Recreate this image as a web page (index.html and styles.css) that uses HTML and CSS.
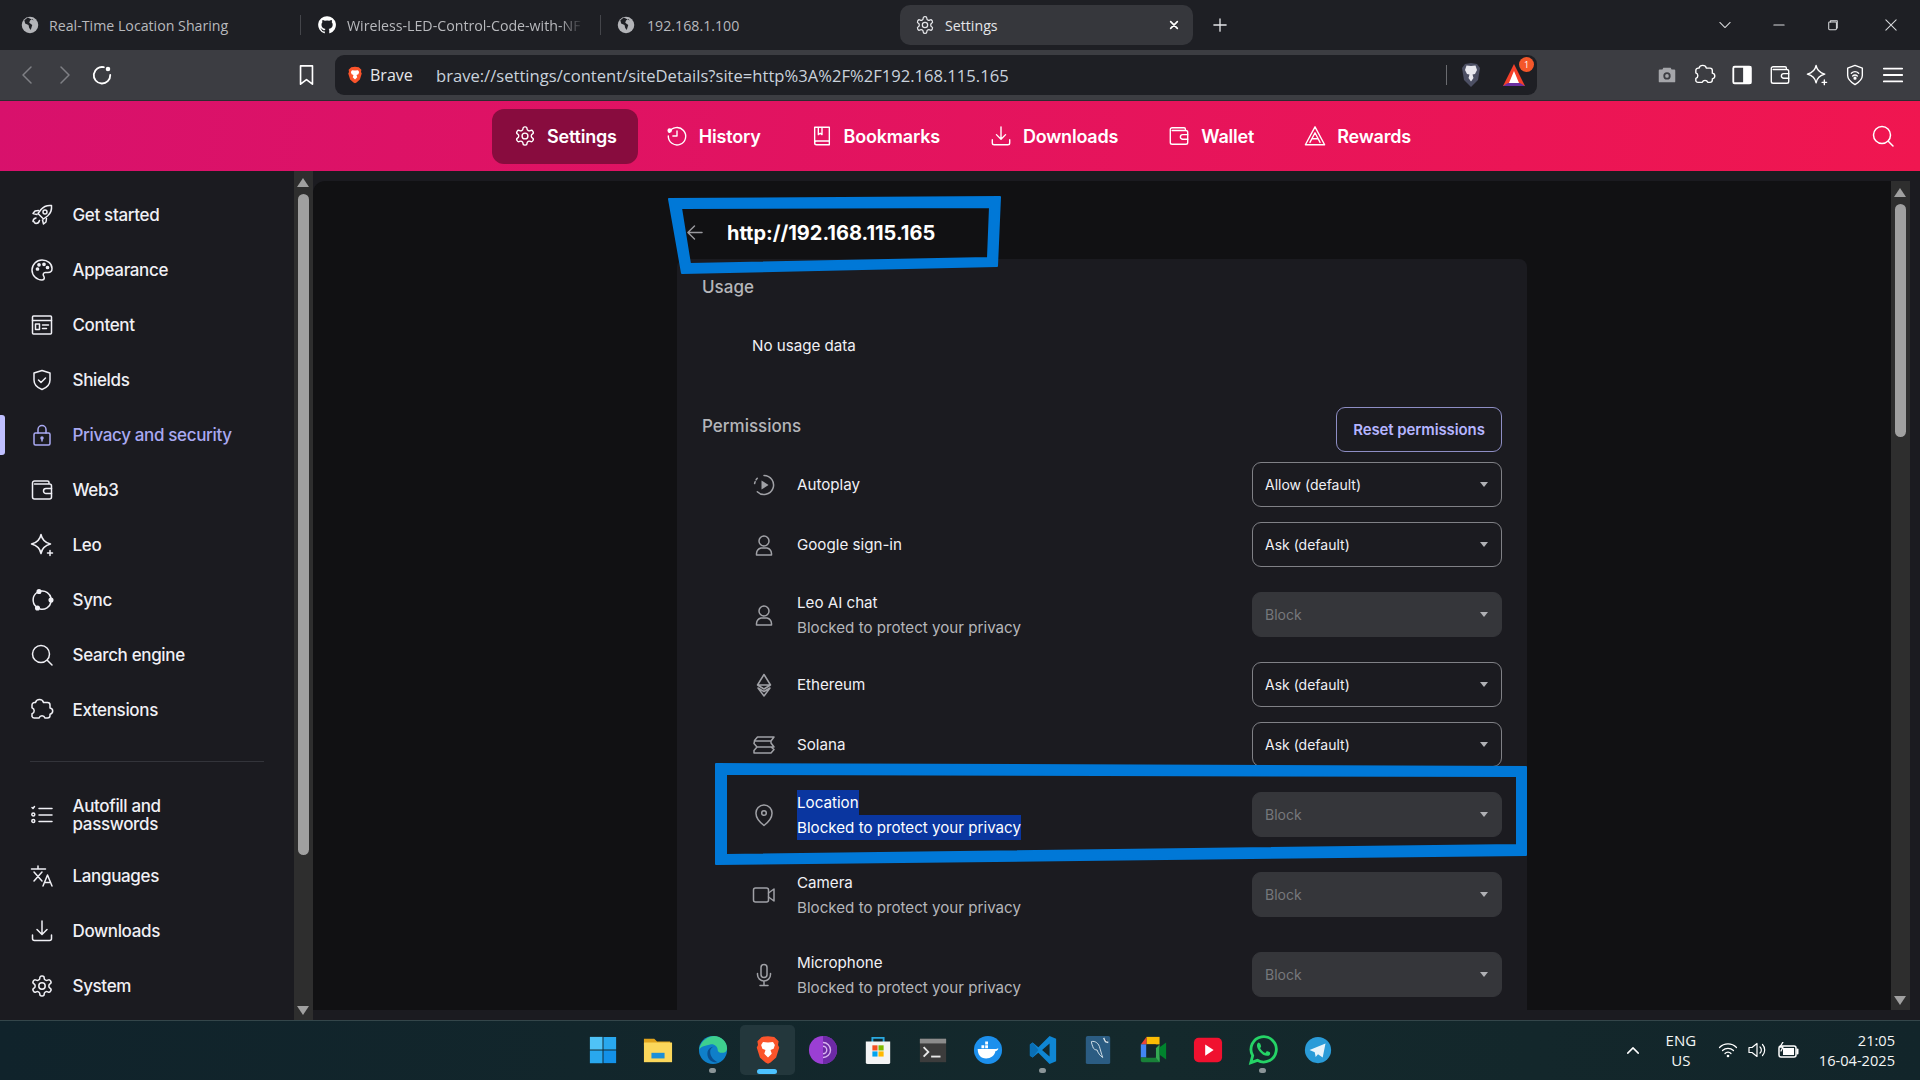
FILE: index.html
```html
<!DOCTYPE html>
<html>

<head>
    <title>Settings</title>
    <meta charset="UTF-8">
    <link rel="stylesheet" href="styles.css">
</head>

<body>
    <svg class="sprite" xmlns="http://www.w3.org/2000/svg">
        <symbol id="i-gear" viewBox="0 0 24 24"><path d="M12.22 2h-.44a2 2 0 0 0-2 2v.18a2 2 0 0 1-1 1.73l-.43.25a2 2 0 0 1-2 0l-.15-.08a2 2 0 0 0-2.73.73l-.22.38a2 2 0 0 0 .73 2.73l.15.1a2 2 0 0 1 1 1.72v.51a2 2 0 0 1-1 1.74l-.15.09a2 2 0 0 0-.73 2.73l.22.38a2 2 0 0 0 2.73.73l.15-.08a2 2 0 0 1 2 0l.43.25a2 2 0 0 1 1 1.73V20a2 2 0 0 0 2 2h.44a2 2 0 0 0 2-2v-.18a2 2 0 0 1 1-1.73l.43-.25a2 2 0 0 1 2 0l.15.08a2 2 0 0 0 2.73-.73l.22-.39a2 2 0 0 0-.73-2.73l-.15-.08a2 2 0 0 1-1-1.74v-.5a2 2 0 0 1 1-1.74l.15-.09a2 2 0 0 0 .73-2.73l-.22-.38a2 2 0 0 0-2.73-.73l-.15.08a2 2 0 0 1-2 0l-.43-.25a2 2 0 0 1-1-1.73V4a2 2 0 0 0-2-2z"/><circle cx="12" cy="12" r="3.2"/></symbol>
        <symbol id="i-puzzle" viewBox="0 0 24 24"><path d="M9.500 1.500c2 0 3.500 1 4 3h4a2.500 2.500 0 0 1 2.500 2.500v3c1.700.3 2.700 1.500 2.700 3s-1 2.800-2.700 3.200v1.300a2.500 2.500 0 0 1-2.500 2.500h-2.500c-.5-1.500-1.500-2.200-3-2.200s-2.500.8-3 2.200H4.500A2.500 2.500 0 0 1 2 18.500v-2.800c1.500-.5 2.200-1.500 2.200-3s-.8-2.500-2.200-3V7a2.500 2.500 0 0 1 2.500-2.500h1c.5-2 2-3 4-3z"/></symbol>
        <symbol id="i-rocket" viewBox="0 0 24 24"><path d="M21.5 2.5c-4.5-.5-8 1-10.5 4L8 10.5l5.5 5.5 4-3c3-2.500 4.500-6 4-10.500z"/><circle cx="15" cy="9" r="2"/><path d="M8.500 7.500 5 8 3 10.500l4 1M16.500 15.500 16 19l-2.500 2-1-4M6 15c-2 .5-3 2-3 3.500.5.500 1 .5 1.500.5 0 1 .5 1.500 1.500 1.500 1.500 0 3-1 3.500-3"/></symbol>
        <symbol id="i-palette" viewBox="0 0 24 24"><path d="M12 2a10 10 0 1 0 0 20c1.500 0 2.300-1 2.300-2.200 0-1.500-1.100-2-1.100-3.300 0-1.200 1-2 2.300-2H18c2.300 0 4-1.700 4-4C22 5.500 17.500 2 12 2z"/><circle cx="7.500" cy="11" r="1.100" fill="currentColor"/><circle cx="9" cy="6.800" r="1.100" fill="currentColor"/><circle cx="14" cy="6.300" r="1.100" fill="currentColor"/><circle cx="17.500" cy="9.500" r="1.100" fill="currentColor"/></symbol>
        <symbol id="i-content" viewBox="0 0 24 24"><rect x="2.500" y="3" width="19" height="18" rx="1"/><path d="M2.500 7.500h19M12.500 12h6M12.500 15.500h4"/><rect x="5.500" y="11" width="4" height="5.500"/></symbol>
        <symbol id="i-shield" viewBox="0 0 24 24"><path d="M12 2.500 4 5v7c0 5 4 8 8 9.500 4-1.500 8-4.500 8-9.500V5z"/><path d="m8.500 12 2.500 2.500 4.500-4.500"/></symbol>
        <symbol id="i-lock" viewBox="0 0 24 24"><rect x="4" y="10" width="16" height="12" rx="1.500"/><path d="M8 10V6.500a4 4 0 0 1 8 0V10M12 15v3"/><circle cx="12" cy="15" r="1" fill="currentColor"/></symbol>
        <symbol id="i-wallet" viewBox="0 0 24 24"><path d="M19 6V4.500A1.500 1.500 0 0 0 17.500 3H4.500A2 2 0 0 0 2.500 5v14a2 2 0 0 0 2 2h15a2 2 0 0 0 2-2V8a2 2 0 0 0-2-2H4.500"/><path d="M21.500 10.500H16a2.500 2.500 0 0 0 0 5h5.500"/></symbol>
        <symbol id="i-leo" viewBox="0 0 24 24"><path d="M11 1.500c1 5.500 3.500 8 9.500 9.500-6 1.500-8.500 4-9.500 9.500-1-5.500-3.500-8-9.500-9.500 6-1.500 8.500-4 9.500-9.500z"/><path d="M20 17.500v5M17.500 20h5"/></symbol>
        <symbol id="i-sync" viewBox="0 0 24 24"><path d="M6 18.500A9 9 0 0 1 7 4.500M11 3a9 9 0 0 1 10 7M21 14a9 9 0 0 1-11 7"/><circle cx="9" cy="3.500" r="1.800" fill="currentColor"/><circle cx="21" cy="12" r="1.800" fill="currentColor"/><circle cx="7.500" cy="20" r="1.800" fill="currentColor"/></symbol>
        <symbol id="i-search" viewBox="0 0 24 24"><circle cx="11" cy="11" r="8.500"/><path d="m17.500 17.500 4.500 4.500"/></symbol>
        <symbol id="i-list" viewBox="0 0 24 24"><path d="M9 5.500h13M9 12h13M9 18.500h13M2 4.500l1 1 1.500-2"/><circle cx="3.300" cy="11.500" r="1.500"/><circle cx="3.300" cy="18" r="1.500"/></symbol>
        <symbol id="i-lang" viewBox="0 0 24 24"><path d="M1.500 5h14M8 2v3M4 8l8 9M12 8l-8 9M13 22l4.500-11 4.500 11M14.500 18.500h6"/></symbol>
        <symbol id="i-download" viewBox="0 0 24 24"><path d="M12 2v13M7 10.500l5 5 5-5M2.500 16v3.500a2 2 0 0 0 2 2h15a2 2 0 0 0 2-2V16"/></symbol>
        <symbol id="i-history" viewBox="0 0 24 24"><path d="M3.500 8A9.500 9.500 0 1 1 2.500 12"/><path d="M12 6.500V12H7.500"/><circle cx="4" cy="6" r="1.700" fill="currentColor"/></symbol>
        <symbol id="i-book" viewBox="0 0 24 24"><path d="M4 2.500h16v15H6a2 2 0 0 0-2 2zM4 19.500a2 2 0 0 0 2 2h14v-4M8 2.500v8l2-1.500 2 1.500v-8"/></symbol>
        <symbol id="i-rewards" viewBox="0 0 24 24"><path d="M12 2 1.500 21.500h21zM12 8.500 6.500 19M12 8.500 17.500 19M9 15h6"/></symbol>
        <symbol id="i-play" viewBox="0 0 24 24"><path d="M12 2.500a9.500 9.500 0 1 1-6.700 16.200"/><path d="M5.300 5.300a9.500 9.500 0 0 0-2.800 6.700" stroke-dasharray="2 2"/><path d="M9.500 7.500v9l7-4.500z" fill="currentColor" stroke="none"/></symbol>
        <symbol id="i-user" viewBox="0 0 24 24"><circle cx="12" cy="8" r="5"/><path d="M4.500 22v-1.500A6 6 0 0 1 9 15h6a6 6 0 0 1 4.500 5.500V22z"/></symbol>
        <symbol id="i-eth" viewBox="0 0 24 24"><path d="M12 1.500 5.500 12 12 16l6.500-4zM5.500 12H18.500M6 15l6 8 6-8-6 3.500z"/></symbol>
        <symbol id="i-sol" viewBox="0 0 24 24"><path d="M5.500 4H22l-3 4H2.500a1 1 0 0 1 0-.5zM2.500 8 2 10.500 5 14h17l-3-4V8M5 14l-3 3.500V20h17l3-3.500-3-2.500"/></symbol>
        <symbol id="i-pin" viewBox="0 0 24 24"><path d="M12 2a8 8 0 0 0-8 8.500c0 4 3.500 8.500 8 12 4.500-3.500 8-8 8-12A8 8 0 0 0 12 2z"/><circle cx="12" cy="10" r="2.300"/></symbol>
        <symbol id="i-cam" viewBox="0 0 24 24"><rect x="1.500" y="5" width="15" height="14" rx="2"/><path d="M16.500 10 22 6v12l-5.500-4"/></symbol>
        <symbol id="i-mic" viewBox="0 0 24 24"><rect x="9" y="1.500" width="6" height="13" rx="3"/><path d="M5.500 10.500v1a6.500 6.500 0 0 0 13 0v-1M12 18v4.500M8 22.500h8"/></symbol>
        <symbol id="i-globe" viewBox="0 0 24 24"><circle cx="12" cy="12" r="11" fill="#b3b4b8"/><path d="M9 2 4.500 5.500l1 4.500 4.500 2 1 4 2 2.500 2-6.500-4-3 1-3 3-2 2 2" fill="#1e1f24"/></symbol>
        <symbol id="i-github" viewBox="0 0 24 24"><path fill="#fff" d="M12 1.500A10.500 10.500 0 0 0 8.700 22c.5.100.700-.2.700-.5v-1.800c-2.900.6-3.500-1.400-3.500-1.400-.5-1.200-1.200-1.500-1.200-1.500-1-.7.100-.7.100-.7 1 .1 1.600 1.100 1.600 1.100.9 1.600 2.500 1.100 3.100.9.100-.7.400-1.100.7-1.400-2.300-.3-4.800-1.200-4.800-5.200 0-1.100.4-2.100 1.100-2.800-.1-.3-.5-1.300.1-2.800 0 0 .9-.3 2.900 1.100a10 10 0 0 1 5.200 0c2-1.400 2.900-1.100 2.900-1.100.6 1.500.2 2.500.1 2.800.7.700 1.100 1.700 1.100 2.800 0 4-2.500 4.900-4.800 5.200.4.300.7 1 .7 1.900v2.900c0 .3.200.6.700.5A10.500 10.500 0 0 0 12 1.500z"/></symbol>
        <symbol id="i-brave" viewBox="0 0 24 24"><path fill="#fb542b" d="M12 1 7 1.500 3.500 5 4 8 3 10l2.500 8 4.500 4 2 1 2-1 4.500-4 2.500-8-1-2 .5-3L17 1.500z"/><path fill="#fff" d="M12 6 8 5.500 6.500 8l1 3 2.500 1-1 3 3 3 3-3-1-3 2.500-1 1-3L16 5.500z"/></symbol>
        <symbol id="i-lion" viewBox="0 0 20 24"><path fill="#4c4f63" d="M10 0 4 1 1 5l1 6 1 6 7 7 7-7 1-6 1-6-3-4z"/><path fill="#e8e8ee" d="M10 3 5.500 2.500 4 7l2 4 2.500.5-1 3.500 2.500 3.500 2.500-3.500-1-3.500 2.500-.5 2-4-1.500-4.500z"/></symbol>
    </svg>

    <div class="tabstrip">
        <div class="tab">
            <svg class="ico-18"><use href="#i-globe"/></svg>
            <span>Real-Time Location Sharing</span>
        </div>
        <div class="tab tab-sep">
            <svg class="ico-20"><use href="#i-github"/></svg>
            <span class="tab-fade">Wireless-LED-Control-Code-with-NF</span>
        </div>
        <div class="tab tab-sep">
            <svg class="ico-18 tab-globe"><use href="#i-globe"/></svg>
            <span>192.168.1.100</span>
        </div>
        <div class="tab tab-active">
            <svg class="ico line ico-20"><use href="#i-gear"/></svg>
            <span>Settings</span>
            <svg class="line tab-close" viewBox="0 0 12 12"><path d="m2 2 8 8M10 2l-8 8"/></svg>
        </div>
        <svg class="line tab-new" viewBox="0 0 16 16"><path d="M8 1v14M1 8h14"/></svg>
        <div class="win-btns">
            <svg class="line" viewBox="0 0 14 14"><path d="m1 4 6 6 6-6"/></svg>
            <svg class="line" viewBox="0 0 14 14"><path d="M1 7h12"/></svg>
            <svg class="line" viewBox="0 0 14 14"><rect x="2" y="3.500" width="9" height="9" rx="1"/><path d="M4 3.500V2h8v8.500h-1"/></svg>
            <svg class="line" viewBox="0 0 14 14"><path d="m1 1 12 12M13 1 1 13"/></svg>
        </div>
    </div>

    <div class="toolbar">
        <div class="nav-btns">
            <svg class="line dim" viewBox="0 0 12 20"><path d="M10 2 2 10l8 8"/></svg>
            <svg class="line dim" viewBox="0 0 12 20"><path d="m2 2 8 8-8 8"/></svg>
            <svg class="line reload" viewBox="0 0 24 24"><path d="M14 3.500A9 9 0 1 0 21 12" stroke-width="2"/><circle cx="18.500" cy="5.500" r="2.500" fill="#fff" stroke="none"/></svg>
        </div>
        <svg class="line bookmark" viewBox="0 0 18 24"><path d="M2.500 2h13v20L9 17l-6.500 5z" stroke-width="1.800"/></svg>
        <div class="addr">
            <svg class="ico-18"><use href="#i-brave"/></svg>
            <span class="addr-name">Brave</span>
            <span class="addr-url">brave://settings/content/siteDetails?site=http%3A%2F%2F192.168.115.165</span>
            <i class="addr-sep"></i>
            <svg class="addr-lion"><use href="#i-lion"/></svg>
            <div class="addr-rewards">
                <svg viewBox="0 0 24 24"><path fill="#f5402a" d="M12 1 1 23h22z"/><path fill="#6b2fa0" d="m1 23 5-3h12l5 3z"/><path fill="#fff" d="m12 8-5 12h10z"/></svg>
                <b>1</b>
            </div>
        </div>
        <div class="tool-icons">
            <svg viewBox="0 0 24 24"><path fill="#a5a6aa" d="M8 4h8l1 2h3a1 1 0 0 1 1 1v12a1 1 0 0 1-1 1H4a1 1 0 0 1-1-1V7a1 1 0 0 1 1-1h3z"/><circle cx="12" cy="13" r="4" fill="#3c3d42"/><circle cx="12" cy="13" r="2" fill="#a5a6aa"/></svg>
            <svg class="line"><use href="#i-puzzle"/></svg>
            <svg class="line" viewBox="0 0 24 24"><rect x="2.500" y="3" width="19" height="18" rx="1.500" stroke-width="2"/><rect x="14" y="3" width="7.500" height="18" fill="#fff"/></svg>
            <svg class="line"><use href="#i-wallet"/></svg>
            <svg class="line"><use href="#i-leo"/></svg>
            <svg class="line" viewBox="0 0 24 24"><path d="M12 1.500 4 4.500v8c0 4.500 4 7.500 8 10 4-2.500 8-5.500 8-10v-8z"/><path d="M8 10a6 6 0 0 1 8 0M9.500 13a3.500 3.500 0 0 1 5 0"/><circle cx="12" cy="15.500" r="1" fill="#fff"/></svg>
            <svg class="line" viewBox="0 0 24 24"><path d="M2 5h20M2 12h20M2 19h20" stroke-width="2"/></svg>
        </div>
    </div>

    <div class="topnav">
        <a class="topnav-item current"><svg class="line"><use href="#i-gear"/></svg>Settings</a>
        <a class="topnav-item"><svg class="line"><use href="#i-history"/></svg>History</a>
        <a class="topnav-item"><svg class="line"><use href="#i-book"/></svg>Bookmarks</a>
        <a class="topnav-item"><svg class="line"><use href="#i-download"/></svg>Downloads</a>
        <a class="topnav-item"><svg class="line"><use href="#i-wallet"/></svg>Wallet</a>
        <a class="topnav-item"><svg class="line"><use href="#i-rewards"/></svg>Rewards</a>
        <svg class="line topnav-search"><use href="#i-search"/></svg>
    </div>

    <div class="main">
        <nav class="sidebar">
            <a class="side-item"><svg class="line"><use href="#i-rocket"/></svg>Get started</a>
            <a class="side-item"><svg class="line"><use href="#i-palette"/></svg>Appearance</a>
            <a class="side-item"><svg class="line"><use href="#i-content"/></svg>Content</a>
            <a class="side-item"><svg class="line"><use href="#i-shield"/></svg>Shields</a>
            <a class="side-item active"><svg class="line"><use href="#i-lock"/></svg>Privacy and security</a>
            <a class="side-item"><svg class="line"><use href="#i-wallet"/></svg>Web3</a>
            <a class="side-item"><svg class="line"><use href="#i-leo"/></svg>Leo</a>
            <a class="side-item"><svg class="line"><use href="#i-sync"/></svg>Sync</a>
            <a class="side-item"><svg class="line"><use href="#i-search"/></svg>Search engine</a>
            <a class="side-item"><svg class="line"><use href="#i-puzzle"/></svg>Extensions</a>
            <hr class="side-sep">
            <a class="side-item side-tall"><svg class="line"><use href="#i-list"/></svg><span>Autofill and<br>passwords</span></a>
            <a class="side-item"><svg class="line"><use href="#i-lang"/></svg>Languages</a>
            <a class="side-item"><svg class="line"><use href="#i-download"/></svg>Downloads</a>
            <a class="side-item"><svg class="line"><use href="#i-gear"/></svg>System</a>
        </nav>
        <div class="scrollbar scroll-side"><i class="up"></i><i class="thumb"></i><i class="down"></i></div>

        <div class="panel-wrap">
            <div class="panel">
                <div class="page">
                    <div class="page-head">
                        <svg class="line" viewBox="0 0 18 18"><path d="M17 9H2M9 2 2 9l7 7"/></svg>
                        <h1>http://192.168.115.165</h1>
                    </div>
                    <div class="card">
                        <h2 class="card-title">Usage</h2>
                        <p class="no-data">No usage data</p>
                        <div class="perm-head">
                            <h2 class="card-title">Permissions</h2>
                            <button class="reset">Reset permissions</button>
                        </div>
                        <div class="perm-row">
                            <svg class="line"><use href="#i-play"/></svg>
                            <div class="perm-text"><div>Autoplay</div></div>
                            <div class="pick">Allow (default)</div>
                        </div>
                        <div class="perm-row">
                            <svg class="line"><use href="#i-user"/></svg>
                            <div class="perm-text"><div>Google sign-in</div></div>
                            <div class="pick">Ask (default)</div>
                        </div>
                        <div class="perm-row tall">
                            <svg class="line"><use href="#i-user"/></svg>
                            <div class="perm-text"><div>Leo AI chat</div><div class="sub">Blocked to protect your privacy</div></div>
                            <div class="pick off">Block</div>
                        </div>
                        <div class="perm-row">
                            <svg class="line"><use href="#i-eth"/></svg>
                            <div class="perm-text"><div>Ethereum</div></div>
                            <div class="pick">Ask (default)</div>
                        </div>
                        <div class="perm-row">
                            <svg class="line"><use href="#i-sol"/></svg>
                            <div class="perm-text"><div>Solana</div></div>
                            <div class="pick">Ask (default)</div>
                        </div>
                        <div class="perm-row tall">
                            <svg class="line"><use href="#i-pin"/></svg>
                            <div class="perm-text picked"><div><span>Location</span></div><div class="sub"><span>Blocked to protect your privacy</span></div></div>
                            <div class="pick off">Block</div>
                        </div>
                        <div class="perm-row tall">
                            <svg class="line"><use href="#i-cam"/></svg>
                            <div class="perm-text"><div>Camera</div><div class="sub">Blocked to protect your privacy</div></div>
                            <div class="pick off">Block</div>
                        </div>
                        <div class="perm-row tall">
                            <svg class="line"><use href="#i-mic"/></svg>
                            <div class="perm-text"><div>Microphone</div><div class="sub">Blocked to protect your privacy</div></div>
                            <div class="pick off">Block</div>
                        </div>
                    </div>
                </div>
            </div>
            <div class="scrollbar scroll-main"><i class="up"></i><i class="thumb"></i><i class="down"></i></div>
        </div>
    </div>

    <div class="taskbar">
        <div></div>
        <div class="task-apps">
            <div class="app"><svg viewBox="0 0 32 32"><path fill="#4fc3f7" d="M2 2h13.500v13.500H2z"/><path fill="#29a8ee" d="M16.500 2H30v13.500H16.500zM2 16.500h13.500V30H2z"/><path fill="#1391e8" d="M16.500 16.500H30V30H16.500z"/></svg></div>
            <div class="app"><svg viewBox="0 0 32 32"><path fill="#e0a31c" d="M1 4h11l3 3h14v4H1z"/><path fill="#fbd75b" d="M1 8h30v21H1z"/><path fill="#1b8fd8" d="M9 19h14v6H9z"/></svg></div>
            <div class="app dot"><svg viewBox="0 0 32 32"><circle cx="16" cy="16" r="15" fill="#0f7fc9"/><path fill="#3ecf8e" d="M1 16C3 5 12 1 17 1c8 0 14 6 14 13 0 4-3 5-6 5-2 0-4-1-4-3 0-4-4-7-8-6-6 1-11 3-12 6z"/><path fill="#0a4f8f" d="M13 18c0-4 3-6 6-6-4 0-9 2-9 8s5 10 11 9c-4-2-8-6-8-11z"/></svg></div>
            <div class="app running"><svg viewBox="0 0 24 24"><use href="#i-brave"/></svg></div>
            <div class="app"><svg viewBox="0 0 32 32"><circle cx="16" cy="16" r="15" fill="#9b3fd4"/><path fill="#6d2aa6" d="M16 1a15 15 0 0 1 0 30z"/><path fill="none" stroke="#d9b3f0" stroke-width="1.500" d="M16 8a8 8 0 0 1 0 16M16 12a4 4 0 0 1 0 8"/></svg></div>
            <div class="app"><svg viewBox="0 0 32 32"><path fill="none" stroke="#2aa9e0" stroke-width="2" d="M10 8V3h12v5"/><path fill="#f4f4f4" d="M3 7h26v22a2 2 0 0 1-2 2H5a2 2 0 0 1-2-2z"/><path fill="#f25022" d="M10 11h5.500v5.500H10z"/><path fill="#7fba00" d="M16.500 11H22v5.500h-5.500z"/><path fill="#00a4ef" d="M10 17.500h5.500V23H10z"/><path fill="#ffb900" d="M16.500 17.500H22V23h-5.500z"/></svg></div>
            <div class="app"><svg viewBox="0 0 32 32"><path fill="#3c3c3c" d="M2 4h28v25H2z"/><path fill="#8c8c8c" d="M2 4h28v5H2z"/><path fill="none" stroke="#e8e8e8" stroke-width="2" d="m6 13 5 5-5 5"/><path fill="#e8e8e8" d="M14 22h10v2H14z"/></svg></div>
            <div class="app"><svg viewBox="0 0 32 32"><circle cx="16" cy="16" r="15" fill="#1c90ed"/><path fill="#fff" d="M5 15h19c1 0 2-1 3-1 0 2-2 3-3 3-1 5-5 8-10 8-6 0-9-4-9-10z"/><path fill="#fff" d="M9 11h3v3H9zM13 11h3v3h-3zM13 7h3v3h-3z"/></svg></div>
            <div class="app dot"><svg viewBox="0 0 32 32"><path fill="#0f86d3" d="m23 1 7 3v24l-7 3-12-12-6 5-3-2V10l3-2 6 5zM23 9l-8 7 8 7z"/><path fill="#0a6fb5" d="M2 10v12l3 2 6-8-6-8z"/></svg></div>
            <div class="app"><svg viewBox="0 0 32 32"><rect x="3" y="1" width="26" height="30" rx="2" fill="#2b5c82"/><path fill="none" stroke="#d7e4ec" d="M9 7c4-1 8 2 9 7l2 7 1 3c-3-2-5-5-6-8-2 0-3-1-4-2-1-3-2-5-2-7z"/><path stroke="#d7e4ec" stroke-width="1.500" d="m22 3 2 4 3 1"/></svg></div>
            <div class="app"><svg viewBox="0 0 32 32"><path fill="#fbbc04" d="M9 2h14v8H9z"/><path fill="#ea4335" d="M9 2v8H3z"/><path fill="#4285f4" d="M3 10h6v14H3z"/><path fill="#188038" d="M3 24h20v5H5a2 2 0 0 1-2-2z"/><path fill="#34a853" d="M23 10v19l-4-5V14z"/><path fill="#00832d" d="m23 13 7-5v18l-7-5z"/><rect x="9" y="10" width="10" height="14" fill="#14262b"/></svg></div>
            <div class="app"><svg viewBox="0 0 32 32"><rect x="1" y="3" width="30" height="26" rx="5" fill="#f0112f"/><path fill="#fff" d="m13 10 9 6-9 6z"/></svg></div>
            <div class="app dot"><svg viewBox="0 0 32 32"><path fill="none" stroke="#25d366" stroke-width="3" d="M3 29.500 5 22A13.500 13.500 0 1 1 10 27z"/><path fill="#25d366" d="M11 8c-2 2-2 5 1 9s7 6 10 5c2-1 2-3 1-4l-3-1-1 2c-2 0-5-3-6-5l1-2-1-3z"/></svg></div>
            <div class="app"><svg viewBox="0 0 32 32"><circle cx="16" cy="16" r="14" fill="#2a9bd8"/><path fill="#e8f4fb" d="M7 16 24 9l-3 15-5-3.500-2.500 3-1-5z"/></svg></div>
        </div>
        <div class="tray">
            <svg class="line tray-up" viewBox="0 0 16 10"><path d="m2 8 6-6 6 6" stroke-width="1.700"/></svg>
            <div class="tray-lang">ENG<br>US</div>
            <svg class="line tray-ico" viewBox="0 0 20 20"><path d="M1.500 7.500a12 12 0 0 1 17 0M4.500 10.500a8 8 0 0 1 11 0M7 13.500a4 4 0 0 1 6 0"/><circle cx="10" cy="16" r="1.300" fill="#fff" stroke="none"/></svg>
            <svg class="line tray-ico" viewBox="0 0 20 20"><path d="M2 7.500h3L10 3.500v13l-5-4H2zM13 7a4 4 0 0 1 0 6M15.500 4.500a8 8 0 0 1 0 11"/></svg>
            <svg class="line tray-bat" viewBox="0 0 22 16"><rect x="2" y="4" width="17" height="11" rx="2"/><rect x="6" y="6" width="11" height="7" fill="#fff" stroke="none"/><path d="M20.500 7.500v4" stroke-width="2"/><path d="M6 0 3 5h3L4 9" stroke-width="1.300"/></svg>
            <div class="tray-clock">21:05<br>16-04-2025</div>
        </div>
    </div>

    <svg class="marks" viewBox="0 0 1920 1080">
        <path fill-rule="evenodd" d="M669 199 1000 197 997 266 682 273ZM681 208 690 264 988 258 990 207Z"/>
        <path fill-rule="evenodd" d="M716 764 1526 767 1526 855 716 864ZM726 774 726 855 1517 845 1517 776Z"/>
    </svg>
</body>

</html>
```

FILE: styles.css
```css
* {
    box-sizing: border-box;
}

html,
body {
    margin: 0;
    height: 100%;
    overflow: hidden;
}

body {
    width: 1920px;
    height: 1080px;
    position: relative;
    background: #1b1b20;
    color: #f0f0f5;
    font-family: "Inter", "Noto Sans", sans-serif;
}

svg {
    display: block;
    flex: none;
}

.sprite {
    display: none;
}

.line {
    fill: none;
    stroke: currentColor;
    stroke-width: 1.5;
    stroke-linecap: round;
    stroke-linejoin: round;
}

.ico-18 {
    width: 18px;
    height: 18px;
}

.ico-20 {
    width: 20px;
    height: 20px;
}

/* tabs */
.tabstrip {
    height: 50px;
    background: #1e1f24;
    display: flex;
    align-items: center;
    font-family: "Open Sans", sans-serif;
    font-size: 14.2px;
    color: #b8b9bd;
}

.tab {
    width: 300px;
    height: 40px;
    display: flex;
    align-items: center;
    gap: 10px;
    padding-left: 21px;
    position: relative;
    overflow: hidden;
    white-space: nowrap;
}

.tab-sep {
    border-left: 1px solid #44454a;
    height: 20px;
    padding-left: 16px;
}

.tab-globe {
    margin-right: 2px;
}

.tab-fade {
    width: 236px;
    overflow: hidden;
    -webkit-mask-image: linear-gradient(to right, #000 90%, transparent);
    mask-image: linear-gradient(to right, #000 90%, transparent);
}

.tab-active {
    width: 293px;
    background: #36373c;
    border-radius: 10px;
    color: #e4e5e8;
    padding-left: 15px;
}

.tab-active .ico {
    color: #e4e5e8;
}

.tab-close {
    width: 10px;
    height: 10px;
    color: #fff;
    margin-left: auto;
    margin-right: 14px;
    stroke-width: 2;
}

.tab-new {
    width: 14px;
    height: 14px;
    margin-left: 20px;
    color: #e4e5e8;
}

.win-btns {
    margin-left: auto;
    display: flex;
    align-items: center;
    gap: 42px;
    padding-right: 23px;
    color: #d8d9dc;
}

.win-btns svg {
    width: 12px;
    height: 12px;
    stroke-width: 1.2;
}

.win-btns svg:last-child {
    margin-left: 4px;
}

/* toolbar */
.toolbar {
    height: 51px;
    background: #3c3d42;
    border-bottom: 1px solid #2b2c30;
    display: flex;
    align-items: center;
    padding-left: 21px;
}

.nav-btns {
    display: flex;
    align-items: center;
    gap: 26px;
    width: 277px;
}

.dim {
    width: 12px;
    height: 20px;
    color: #7f8085;
}

.reload {
    width: 22px;
    height: 22px;
    margin-left: -6px;
    color: #fff;
}

.bookmark {
    width: 17px;
    height: 22px;
    color: #fff;
}

.addr {
    width: 1202px;
    height: 40px;
    margin-left: 20px;
    background: #1e1f24;
    border-radius: 9px;
    display: flex;
    align-items: center;
    padding-left: 11px;
    font-family: "Open Sans", sans-serif;
    font-size: 16px;
    color: #e6e7ea;
}

.addr-name {
    margin-left: 6px;
    width: 66px;
}

.addr-url {
    color: #c9d2dc;
    width: 1010px;
    font-size: 16.6px;
    white-space: nowrap;
}

.addr-sep {
    width: 1px;
    height: 20px;
    background: #6a6b70;
}

.addr-lion {
    width: 20px;
    height: 24px;
    margin-left: 14px;
}

.addr-rewards {
    width: 24px;
    height: 24px;
    margin-left: 21px;
    position: relative;
}

.addr-rewards b {
    position: absolute;
    top: -6px;
    right: -8px;
    width: 15px;
    height: 15px;
    border-radius: 50%;
    background: #f4572a;
    color: #fff;
    font-size: 9px;
    font-weight: 500;
    line-height: 15px;
    text-align: center;
}

.tool-icons {
    display: flex;
    align-items: center;
    gap: 15.6px;
    margin-left: 119px;
    color: #fff;
}

.tool-icons svg {
    width: 22px;
    height: 22px;
}

/* pink nav */
.topnav {
    height: 70px;
    background: linear-gradient(100deg, #d8116c, #f01650);
    display: flex;
    align-items: center;
    padding-left: 492px;
    gap: 8px;
    color: #fff;
    position: relative;
}

.topnav-item {
    height: 55px;
    padding: 0 20px 0 22px;
    border-radius: 12px;
    display: flex;
    align-items: center;
    gap: 11px;
    font-size: 18px;
    font-weight: 600;
    letter-spacing: -0.2px;
}

.topnav-item svg {
    width: 22px;
    height: 22px;
}

.current {
    background: #880c3e;
    padding-right: 21px;
    margin-right: -2px;
}

.topnav-search {
    width: 24px;
    height: 24px;
    margin-left: auto;
    margin-right: 25px;
}

/* main area */
.main {
    height: 849px;
    display: flex;
}

.sidebar {
    width: 294px;
    padding: 16.5px 30px 0;
}

.side-item {
    height: 55px;
    display: flex;
    align-items: center;
    gap: 18.5px;
    font-size: 17px;
    font-weight: 500;
    letter-spacing: -0.35px;
    line-height: 18px;
    position: relative;
}

.side-item svg {
    width: 24px;
    height: 24px;
}

.side-tall {
    height: 62px;
    margin-bottom: 2px;
}

.active {
    color: #a9a9f2;
}

.active::before {
    content: "";
    position: absolute;
    left: -30px;
    top: 7px;
    width: 5px;
    height: 40px;
    border-radius: 0 3px 3px 0;
    background: #c0c0ff;
}

.side-sep {
    border: 0;
    border-top: 1px solid #33343a;
    margin: 23px 0 22.5px;
}

.scrollbar {
    width: 19px;
    background: #2e2e2e;
    position: relative;
}

.scrollbar i {
    position: absolute;
    display: block;
}

.thumb {
    left: 4px;
    width: 11px;
    border-radius: 6px;
    background: #a0a0a0;
}

.up,
.down {
    left: 3px;
    width: 0;
    height: 0;
    border-left: 6.5px solid transparent;
    border-right: 6.5px solid transparent;
}

.up {
    top: 7px;
    border-bottom: 9px solid #a0a0a0;
}

.down {
    bottom: 5px;
    border-top: 9px solid #a0a0a0;
}

.scroll-side .thumb {
    top: 23px;
    height: 661px;
}

.panel-wrap {
    flex: 1;
    display: flex;
    padding: 10px 10px 10px 0;
}

.panel {
    width: 1578px;
    background: #111113;
    border-radius: 12px 0 0 0;
    overflow: hidden;
}

.scroll-main .thumb {
    top: 23px;
    height: 233px;
}

.page {
    width: 850px;
    margin: 0 auto;
}

.page-head {
    height: 78px;
    display: flex;
    align-items: center;
    gap: 24px;
    padding: 25px 0 0 9px;
    color: #9a9a9f;
}

.page-head svg {
    width: 17px;
    height: 17px;
}

.page-head h1 {
    margin: 0;
    font-size: 20px;
    font-weight: 700;
    color: #fff;
}

.card {
    background: #1b1b20;
    border-radius: 8px 8px 0 0;
    padding: 16px 25px 0;
}

.card-title {
    margin: 0;
    font-size: 17px;
    font-weight: 500;
    line-height: 24px;
    color: #b5b6ba;
}

.no-data {
    margin: 35px 0 0 50px;
    font-size: 15.15px;
    line-height: 24px;
    color: #f0f0f5;
}

.perm-head {
    margin-top: 49px;
    height: 45px;
    display: flex;
    justify-content: space-between;
}

.perm-head .card-title {
    margin-top: 7px;
}

.reset {
    width: 166px;
    height: 45px;
    background: #1b1b20;
    border: 1px solid #8e8ec4;
    border-radius: 9px;
    font-family: inherit;
    font-size: 15px;
    font-weight: 600;
    letter-spacing: -0.1px;
    color: #b5b5ff;
}

.perm-row {
    height: 60px;
    display: flex;
    align-items: center;
    gap: 21px;
    padding-left: 50px;
    color: #a0a1a6;
}

.perm-head + .perm-row {
    margin-top: 2.5px;
}

.tall {
    height: 80px;
}

.perm-row > svg {
    width: 24px;
    height: 24px;
}

.perm-text {
    font-size: 15.15px;
    line-height: 25px;
    color: #f0f0f5;
}

.sub {
    color: #b5b6ba;
}

.picked {
    color: #fff;
}

.picked .sub {
    color: #fff;
}

.picked span {
    background: #0a36a0;
    display: inline-block;
    vertical-align: top;
}

.pick {
    width: 250px;
    height: 45px;
    margin-left: auto;
    border: 1px solid #808186;
    border-radius: 9px;
    padding: 0 12px;
    display: flex;
    align-items: center;
    font-size: 14px;
    color: #f0f0f5;
    position: relative;
}

.pick::after {
    content: "";
    position: absolute;
    right: 13px;
    top: 19px;
    border-left: 4.5px solid transparent;
    border-right: 4.5px solid transparent;
    border-top: 5px solid #b0b1b5;
}

.off {
    background: #35363a;
    border-color: #35363a;
    color: #77787c;
}

/* taskbar */
.taskbar {
    height: 60px;
    padding-bottom: 1px;
    background: linear-gradient(90deg, #10232b, #14292c 60%, #12252a);
    border-top: 1px solid #34464a;
    display: grid;
    grid-template-columns: 1fr auto 1fr;
    align-items: center;
}

.task-apps {
    display: flex;
}

.app {
    width: 55px;
    height: 50px;
    display: flex;
    align-items: center;
    justify-content: center;
    position: relative;
}

.app svg {
    width: 30px;
    height: 30px;
}

.dot::after {
    content: "";
    position: absolute;
    left: 24px;
    bottom: 2px;
    width: 7px;
    height: 5px;
    border-radius: 3px;
    background: #8b9598;
}

.running {
    background: #23373c;
    border-radius: 5px;
}

.running::after {
    content: "";
    position: absolute;
    left: 17px;
    bottom: 1px;
    width: 20px;
    height: 5px;
    border-radius: 3px;
    background: #4cc2ff;
}

.tray {
    display: flex;
    align-items: center;
    justify-content: flex-end;
    padding-right: 25px;
    font-family: "Open Sans", sans-serif;
    font-size: 14.6px;
    line-height: 20px;
    color: #f4f6f6;
}

.tray-up {
    width: 14px;
    height: 9px;
    color: #fff;
}

.tray-lang {
    width: 40px;
    margin: 0 17px 0 21px;
    text-align: center;
    font-size: 15px;
}

.tray-ico {
    width: 20px;
    height: 20px;
    margin-right: 9px;
    color: #fff;
    stroke-width: 1.2;
}

.tray-ico + .tray-bat {
    margin-left: 1px;
}

.tray-bat {
    width: 22px;
    height: 16px;
    margin-right: 20px;
    color: #fff;
}

.tray-clock {
    text-align: right;
}

.marks {
    position: absolute;
    left: 0;
    top: 0;
    width: 1920px;
    height: 1080px;
    fill: #0078d7;
    stroke: #0078d7;
    stroke-width: 2;
    stroke-linejoin: round;
    pointer-events: none;
}
```
